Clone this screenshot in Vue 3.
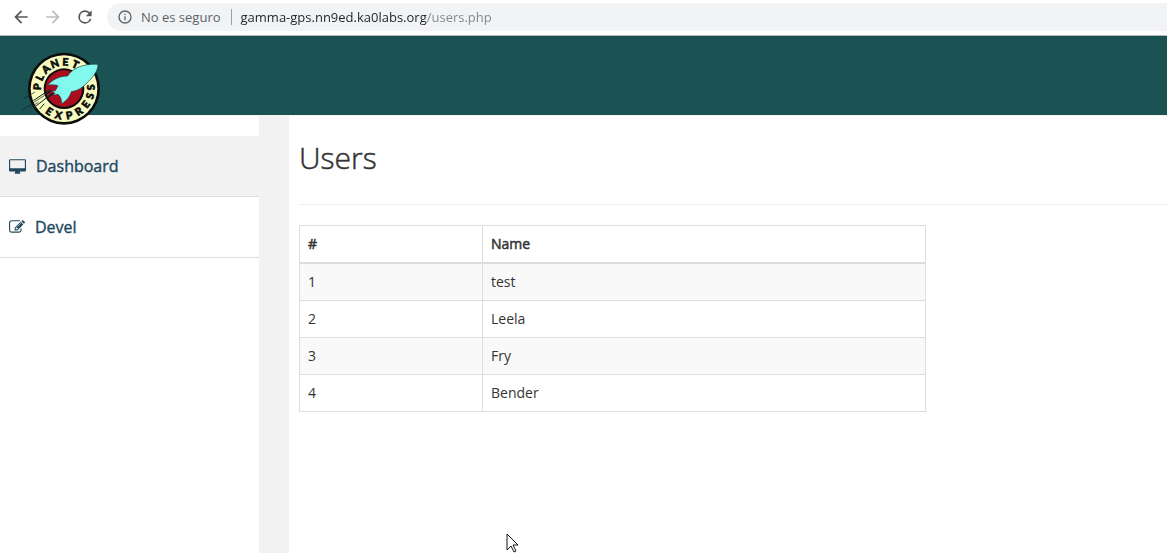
<script setup>
import { ref } from 'vue'

const address = ref('gamma-gps.nn9ed.ka0labs.org/users.php')

const users = [
  { id: 1, name: 'test' },
  { id: 2, name: 'Leela' },
  { id: 3, name: 'Fry' },
  { id: 4, name: 'Bender' },
]

// Letters of the round badge: angle in degrees around its centre.
const upper = [
  ['P', -86], ['L', -65], ['A', -43], ['N', -20], ['E', 3], ['T', 25],
]
const lower = [
  ['E', 33], ['X', 12], ['P', -11], ['R', -33], ['E', -54], ['S', -74], ['S', -93],
]
</script>

<template>
  <div class="window">
    <div class="toolbar">
      <button class="nav" type="button" aria-label="Back">
        <svg viewBox="0 0 24 24"><path d="M20 11H7.830l5.590-5.590L12 4l-8 8 8 8 1.410-1.410L7.830 13H20z" /></svg>
      </button>
      <button class="nav off" type="button" aria-label="Forward" disabled>
        <svg viewBox="0 0 24 24"><path d="M12 4l-1.410 1.410L16.170 11H4v2h12.170l-5.580 5.590L12 20l8-8z" /></svg>
      </button>
      <button class="nav" type="button" aria-label="Reload">
        <svg viewBox="0 0 24 24"><path d="M17.650 6.350A7.960 7.960 0 0 0 12 4a8 8 0 1 0 7.730 10h-2.080A6 6 0 1 1 12 6c1.660 0 3.140.69 4.220 1.780L13 11h7V4z" /></svg>
      </button>
      <div class="omnibox">
        <button class="security" type="button">
          <svg viewBox="0 0 24 24"><path d="M11 17h2v-6h-2zm1-15a10 10 0 1 0 0 20 10 10 0 0 0 0-20zm0 18a8 8 0 1 1 0-16 8 8 0 0 1 0 16zM11 9h2V7h-2z" /></svg>
          <span>No es seguro</span>
        </button>
        <input v-model="address" class="address" type="text" aria-label="Address" spellcheck="false" />
      </div>
    </div>

    <header class="banner">
      <a class="logo" href="#" aria-label="Planet Express">
        <svg viewBox="0 0 285 270">
          <circle cx="147" cy="131" r="108" fill="#0b0c0b" />
          <circle cx="147" cy="131" r="100" fill="#f8fbc0" />
          <circle cx="147" cy="131" r="61" fill="#0b0c0b" />
          <circle cx="147" cy="131" r="55" fill="#ab0d1f" />
          <g class="letters">
            <text v-for="([c, a], i) in upper" :key="'u' + i" x="147" y="62" :transform="`rotate(${a} 147 131)`">{{ c }}</text>
            <text v-for="([c, a], i) in lower" :key="'l' + i" x="147" y="223" :transform="`rotate(${a} 147 131)`">{{ c }}</text>
          </g>
          <g fill="none" stroke="#10201f">
            <path d="M22 195L110 137M26 161L60 141M46 188L70 172" stroke-width="2" />
            <path d="M55 167L104 134M63 183L109 147M74 192L88 176" stroke-width="3" />
            <path d="M90 149l17-11M98 158l16-13" stroke-width="5" />
          </g>
          <path d="M249 58C226 56 199 61 183 70C172 76 164 84 158 93C132 93 111 105 98 121C109 119 119 119 129 122L121 137L110 139L120 144L115 151L129 148C137 154 140 164 140 176C154 168 165 155 169 140C186 138 201 129 214 116C233 97 249 80 249 58Z" fill="#83f8ed" stroke="#143f42" stroke-width="2" />
        </svg>
      </a>
    </header>

    <div class="body">
      <nav class="sidebar">
        <a class="item active" href="#">
          <svg class="desktop" viewBox="0 0 1920 1664"><path d="M1792 992v-832q0-13-9.500-22.500t-22.500-9.500h-1600q-13 0-22.500 9.500t-9.500 22.500v832q0 13 9.500 22.500t22.500 9.500h1600q13 0 22.500-9.500t9.500-22.500zm128-832v1088q0 66-47 113t-113 47h-544q0 37 16 77.500t32 71 16 43.500q0 26-19 45t-45 19h-512q-26 0-45-19t-19-45q0-14 16-44t32-70 16-78h-544q-66 0-113-47t-47-113v-1088q0-66 47-113t113-47h1600q66 0 113 47t47 113z" /></svg>
          <span>Dashboard</span>
        </a>
        <a class="item" href="#">
          <svg class="edit" viewBox="0 0 1792 1792"><path d="M888 1184l116-116-152-152-116 116v56h96v96h56zm440-720q-16-16-33 1l-350 350q-17 17-1 33t33-1l350-350q17-17 1-33zm80 594v190q0 119-84.500 203.500t-203.500 84.500h-832q-119 0-203.500-84.500t-84.500-203.500v-832q0-119 84.500-203.500t203.500-84.500h832q63 0 117 25 15 7 18 23 3 17-9 29l-49 49q-14 14-32 8-23-6-45-6h-832q-66 0-113 47t-47 113v832q0 66 47 113t113 47h832q66 0 113-47t47-113v-126q0-13 9-22l64-64q15-15 35-7t20 29zm-96-738l288 288-672 672h-288v-288zm444 132l-92 92-288-288 92-92q28-28 68-28t68 28l152 152q28 28 28 68t-28 68z" /></svg>
          <span>Devel</span>
        </a>
      </nav>
      <main class="content">
        <h1>Users</h1>
        <hr />
        <table>
          <thead>
            <tr><th class="num" scope="col">#</th><th scope="col">Name</th></tr>
          </thead>
          <tbody>
            <tr v-for="u in users" :key="u.id"><td>{{ u.id }}</td><td>{{ u.name }}</td></tr>
          </tbody>
        </table>
      </main>
    </div>

    <svg class="pointer" viewBox="0 0 13 20"><path d="M1 1v16l4-4 3 6 2-1-3-6h5z" /></svg>
  </div>
</template>

<style>
body {
  margin: 0;
  background: #fff;
}
</style>

<style scoped>
.window {
  position: relative;
  display: flex;
  flex-direction: column;
  min-height: 100vh;
  overflow: hidden;
  font: 14px/20px "Open Sans", "Noto Sans", sans-serif;
  color: #333;
}
.toolbar {
  display: flex;
  align-items: center;
  gap: 12px;
  box-sizing: border-box;
  height: 36px;
  padding: 0 0 2px 11px;
  border-bottom: 1px solid #b4b8b9;
}
button {
  display: flex;
  align-items: center;
  padding: 0;
  border: 0;
  background: none;
  font: inherit;
}
.nav svg {
  width: 20px;
  height: 20px;
  fill: #54585d;
}
.nav.off svg {
  fill: #babcbe;
}
.omnibox {
  display: flex;
  flex: 1;
  align-items: center;
  height: 28px;
  padding-left: 10px;
  border-radius: 14px 0 0 14px;
  background: #f1f3f4;
}
.security {
  gap: 8px;
  height: 16px;
  padding-right: 10px;
  border-right: 1px solid #9aa0a6;
  color: #5f6368;
  font-size: 13px;
}
.security svg {
  width: 16px;
  height: 16px;
  fill: #5f6368;
}
.address {
  flex: 1;
  min-width: 0;
  padding: 0 0 0 9px;
  border: 0;
  outline: 0;
  background: linear-gradient(90deg, #202124 195px, #80868b 195px);
  -webkit-background-clip: text;
  background-clip: text;
  color: transparent;
  font: 13px/20px "Open Sans", "Noto Sans", sans-serif;
}
.banner {
  height: 79px;
  background: #1b5355;
}
.logo {
  position: relative;
  z-index: 1;
  display: block;
  width: 95px;
  margin-left: 15px;
  padding-top: 9px;
}
.logo svg {
  display: block;
  width: 95px;
  height: 90px;
}
.letters {
  font: 900 31px Lato, sans-serif;
  fill: #0b0c0b;
  stroke: #0b0c0b;
  stroke-width: 2px;
  text-anchor: middle;
}
.body {
  display: flex;
  flex: 1;
  background: #f2f2f2;
}
.sidebar {
  width: 259px;
  padding-top: 20px;
  margin-top: 1px;
  background: #fff;
}
.item {
  display: flex;
  align-items: center;
  gap: 10px;
  height: 60px;
  padding-left: 9px;
  border-bottom: 1px solid #ddd;
  color: #23495f;
  font-size: 16px;
  -webkit-text-stroke: 0.4px #23495f;
  text-decoration: none;
}
.item.active {
  background: #f2f2f2;
}
.item svg {
  fill: #23495f;
}
.desktop {
  width: 17px;
  height: 15px;
}
.edit {
  width: 16px;
  height: 16px;
}
.content {
  flex: 1;
  margin: 1px 0 0 30px;
  padding: 20px 0 0 10px;
  background: #fff;
}
h1 {
  margin: 0;
  color: #333;
  font-size: 30px;
  font-weight: 300;
  line-height: 44px;
  -webkit-text-stroke: 0.5px #333;
}
hr {
  margin: 24px 0 20px;
  border: 0;
  border-top: 1px solid #eee;
}
table {
  width: 627px;
  max-width: 100%;
  border-collapse: collapse;
}
th,
td {
  padding: 8px;
  border: 1px solid #ddd;
  text-align: left;
}
th {
  border-bottom-width: 2px;
  font-weight: 400;
  -webkit-text-stroke: 0.5px #333;
}
.num {
  width: 166px;
}
tbody tr:nth-child(odd) {
  background: #f9f9f9;
}
.pointer {
  position: absolute;
  top: 533px;
  left: 506px;
  width: 13px;
  height: 20px;
  fill: #fff;
  stroke: #17171f;
}
</style>
